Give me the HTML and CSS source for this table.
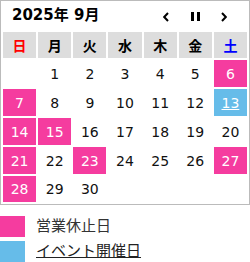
FILE: index.html
```html
<!DOCTYPE html>
<html lang="ja">
<head>
<meta charset="utf-8">
<link rel="stylesheet" href="styles.css">
</head>
<body>
<div class="cal">
  <div class="head">
    <div class="title">2025年 9月</div>
    <div class="nav">
      <span class="btn"><svg width="6" height="10" viewBox="0 0 6 10"><polyline points="5,1 1.2,5 5,9" fill="none" stroke="#000" stroke-width="2"/></svg></span>
      <span class="btn"><svg width="9" height="9" viewBox="0 0 9 9"><rect x="0" y="0" width="3" height="9" fill="#000"/><rect x="6" y="0" width="3" height="9" fill="#000"/></svg></span>
      <span class="btn"><svg width="6" height="10" viewBox="0 0 6 10"><polyline points="1,1 4.8,5 1,9" fill="none" stroke="#000" stroke-width="2"/></svg></span>
    </div>
  </div>
  <table class="grid">
    <thead>
      <tr>
        <th class="sun">日</th><th>月</th><th>火</th><th>水</th><th>木</th><th>金</th><th class="sat">土</th>
      </tr>
    </thead>
    <tbody>
      <tr><td></td><td>1</td><td>2</td><td>3</td><td>4</td><td>5</td><td class="off">6</td></tr>
      <tr><td class="off">7</td><td>8</td><td>9</td><td>10</td><td>11</td><td>12</td><td class="event"><span class="link">13</span></td></tr>
      <tr><td class="off">14</td><td class="off">15</td><td>16</td><td>17</td><td>18</td><td>19</td><td>20</td></tr>
      <tr><td class="off">21</td><td>22</td><td class="off">23</td><td>24</td><td>25</td><td>26</td><td class="off">27</td></tr>
      <tr class="last"><td class="off">28</td><td>29</td><td>30</td><td></td><td></td><td></td><td></td></tr>
    </tbody>
  </table>
</div>
<ul class="legend">
  <li><span class="swatch off"></span><span class="label">営業休止日</span></li>
  <li><span class="swatch event"></span><span class="label link-text">イベント開催日</span></li>
</ul>
</body>
</html>
```
FILE: styles.css
```css
html, body {
  margin: 0;
  padding: 0;
  background: #fff;
}
body {
  font-family: "DejaVu Sans", "Noto Sans CJK JP", sans-serif;
  color: #000;
  width: 250px;
}
.cal {
  border: 1px solid #bbb;
  width: 250px;
  box-sizing: border-box;
}
.head {
  display: flex;
  align-items: center;
  height: 29px;
  padding: 0 11px 0 11px;
}
.title {
  font-size: 15px;
  font-weight: bold;
  line-height: 1;
  position: relative;
  top: 0;
}
.nav {
  margin-left: auto;
  display: flex;
  gap: 1px;
  padding-top: 2px;
}
.btn {
  width: 28px;
  height: 16px;
  display: flex;
  align-items: center;
  justify-content: center;
}
.btn svg {
  display: block;
}
.grid {
  width: 100%;
  table-layout: fixed;
  border-spacing: 2px;
  border-collapse: separate;
}
.grid th {
  background: #ddd;
  height: 26px;
  padding: 0;
  font-size: 14px;
  font-weight: bold;
  text-align: center;
  vertical-align: middle;
}
.grid th.sun { color: #f00; }
.grid th.sat { color: #00f; }
.grid td {
  height: 27px;
  padding: 0;
  font-size: 14px;
  text-align: center;
  vertical-align: middle;
  color: #111;
}
.grid tr.last td {
  height: 26px;
}
.grid td.off {
  background: #f53c9f;
  color: #fff;
}
.grid td.event {
  background: #66bce9;
  color: #fff;
}
.link {
  text-decoration: underline;
}
.legend {
  list-style: none;
  margin: 11px 0 0 0;
  padding: 0;
  display: flex;
  flex-direction: column;
  gap: 4px;
}
.legend li {
  display: flex;
  align-items: center;
  height: 21px;
}
.swatch {
  width: 25px;
  height: 21px;
  display: block;
}
.swatch.off { background: #f53c9f; }
.swatch.event { background: #66bce9; }
.label {
  margin-left: 11px;
  font-size: 15px;
  color: #333;
  line-height: 1;
}
.link-text {
  color: #222;
  text-decoration: underline;
}
```
